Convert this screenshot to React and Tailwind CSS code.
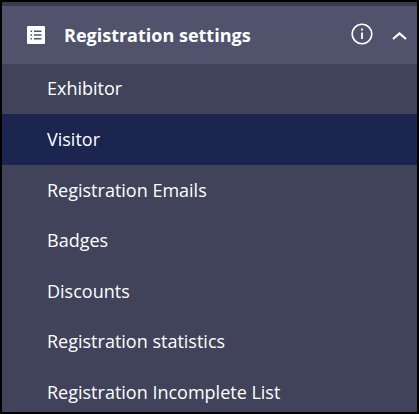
import React from "react";

const items = [
  "Exhibitor",
  "Visitor",
  "Registration Emails",
  "Badges",
  "Discounts",
  "Registration statistics",
  "Registration Incomplete List",
];

const App = () => {
  return (
    <div className="w-[419px] h-[414px] overflow-hidden bg-[#40435a] border-2 border-black font-['Open_Sans',sans-serif] text-white">
      <div className="h-[4px] bg-[#3a3c4e]" />

      {/* Header */}
      <div className="h-[58px] bg-[#50536b] flex items-center pb-[1px] pl-[25px] pr-[10px]">
        <svg width="18" height="18" viewBox="0 0 18 18" className="shrink-0">
          <path
            fillRule="evenodd"
            fill="#fff"
            d="M1 0h16a1 1 0 0 1 1 1v16a1 1 0 0 1-1 1H1a1 1 0 0 1-1-1V1a1 1 0 0 1 1-1zM3.5 4.5v1.6h1.6V4.5zm3.5 0v1.6h7.5V4.5zM3.5 8.2v1.6h1.6V8.2zm3.5 0v1.6h7.5V8.2zM3.5 11.9v1.6h1.6v-1.6zm3.5 0v1.6h7.5v-1.6z"
          />
        </svg>
        <span className="ml-[19px] text-[18px] font-bold leading-[24px]">Registration settings</span>
        <svg width="22" height="22" viewBox="0 0 22 22" fill="none" stroke="#fff" className="ml-auto mb-[2px] shrink-0">
          <circle cx="11" cy="11" r="9.8" strokeWidth="1.6" />
          <path d="M11 9.5v6.5" strokeWidth="1.8" />
          <path d="M11 5.6v1.9" strokeWidth="1.8" />
        </svg>
        <svg width="15" height="8" viewBox="0 0 15 8" fill="none" stroke="#fff" strokeWidth="2.2" className="ml-[19px] mt-[2px] shrink-0">
          <path d="M1 7 7.5 1.4 14 7" />
        </svg>
      </div>

      {/* Items */}
      <ul className="mt-[-0.4px]">
        {items.map((item) => (
          <li
            key={item}
            className={`h-[50.6px] flex items-center pl-[45px] text-[18px] ${item === "Visitor" ? "bg-[#1c2550]" : ""}`}
          >
            {item}
          </li>
        ))}
      </ul>
    </div>
  );
};

export default App;
